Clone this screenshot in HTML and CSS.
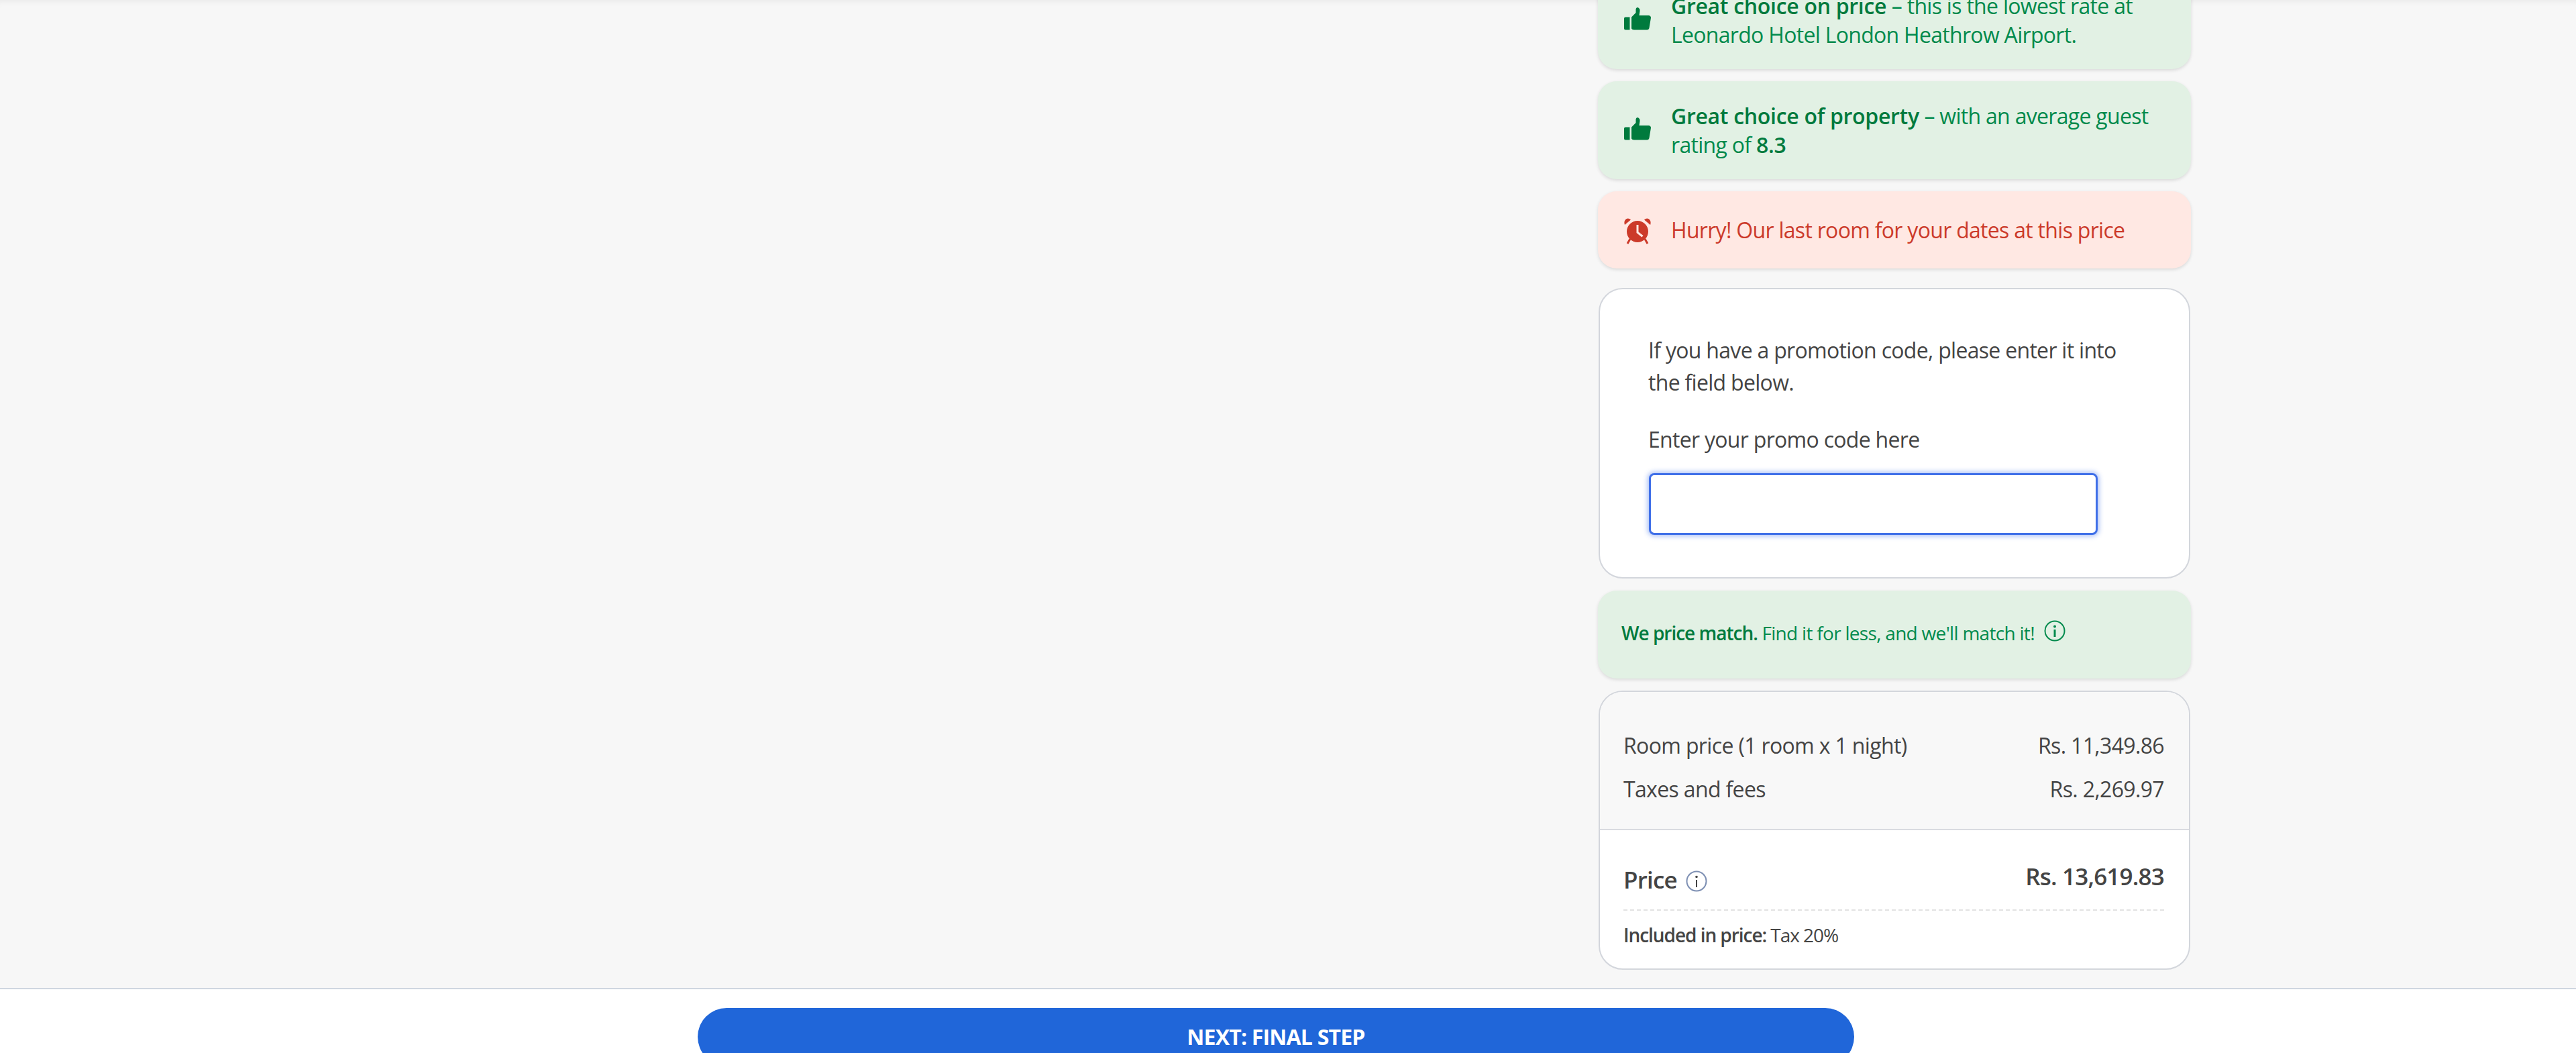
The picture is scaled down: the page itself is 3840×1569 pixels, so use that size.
FILE: index.html
```html
<!DOCTYPE html>
<html lang="en">
<head>
<meta charset="utf-8">
<title>Booking</title>
<link rel="stylesheet" href="styles.css">
</head>
<body>
<main class="page">
  <div class="spacer"></div>
  <aside class="side">
    <div class="note note-green first">
      <svg class="note-icon thumb" viewBox="0 0 40 34"><path d="M0 16.500q0-2 2-2h6.500v19H2q-2 0-2-2zM11 14.500 17.500 8V2.500Q18 0 20 0q4 1 3.500 5.500L22.500 12h14.500q3 .5 3 3.500l-2.500 15q-.5 3-3.500 3H15q-3 0-4-2z" fill="currentColor"/></svg>
      <p><b>Great choice on price</b> – this is the lowest rate at Leonardo Hotel London Heathrow Airport.</p>
    </div>
    <div class="note note-green">
      <svg class="note-icon thumb" viewBox="0 0 40 34"><path d="M0 16.500q0-2 2-2h6.500v19H2q-2 0-2-2zM11 14.500 17.500 8V2.500Q18 0 20 0q4 1 3.500 5.500L22.500 12h14.500q3 .5 3 3.500l-2.500 15q-.5 3-3.500 3H15q-3 0-4-2z" fill="currentColor"/></svg>
      <p><b>Great choice of property</b> – with an average guest rating of <b>8.3</b></p>
    </div>
    <div class="note note-red">
      <svg class="note-icon alarm" viewBox="0 0 40 40"><path d="M20 5a16 16 0 1 0 0 32 16 16 0 0 0 0-32zM18.500 11h3v10.500l7 5.500-2 2.500-8-6.500z" fill="currentColor" fill-rule="evenodd"/><path d="M1 11 10 3.500q-3-3-6.500-1.500Q-1 5 1 11zM39 11 30 3.500q3-3 6.500-1.500 4.500 3 2.500 9.500z" fill="currentColor"/><path d="M9 32 5 39M31 32l4 7" stroke="currentColor" stroke-width="3"/></svg>
      <p>Hurry! Our last room for your dates at this price</p>
    </div>
    <section class="promo">
      <p class="promo-text">If you have a promotion code, please enter it into the field below.</p>
      <label class="promo-label" for="promo">Enter your promo code here</label>
      <input class="promo-input" id="promo" type="text">
    </section>
    <div class="note note-green match">
      <p><b>We price match.</b> Find it for less, and we'll match it!</p>
      <svg class="info info-green" viewBox="0 0 32 32"><circle cx="16" cy="16" r="14.500" fill="none" stroke="currentColor" stroke-width="2"/><circle cx="16" cy="9.500" r="2" fill="currentColor"/><path d="M16 14v11" stroke="currentColor" stroke-width="3"/></svg>
    </div>
    <section class="price-card">
      <div class="breakdown">
        <div class="row"><span>Room price (1 room x 1 night)</span><span>Rs. 11,349.86</span></div>
        <div class="row"><span>Taxes and fees</span><span>Rs. 2,269.97</span></div>
      </div>
      <div class="total">
        <div class="total-row">
          <span class="total-label">Price <svg class="info info-blue" viewBox="0 0 32 32"><circle cx="16" cy="16" r="14.500" fill="none" stroke="currentColor" stroke-width="2"/><circle cx="16" cy="9.500" r="1.800" fill="#444"/><path d="M16 14v11" stroke="#444" stroke-width="2"/></svg></span>
          <span class="total-value">Rs. 13,619.83</span>
        </div>
        <p class="included"><b>Included in price:</b> Tax 20%</p>
      </div>
    </section>
  </aside>
</main>
<footer class="footer">
  <button class="next" type="button">NEXT: FINAL STEP</button>
</footer>
</body>
</html>
```
FILE: styles.css
```css
* { box-sizing: border-box; }
html, body { margin: 0; height: 100%; }
body {
  display: flex;
  flex-direction: column;
  height: 100vh;
  overflow: hidden;
  background: #f7f7f7;
  font-family: "Open Sans", "Noto Sans", sans-serif;
  color: #444;
}
p { margin: 0; }
.page {
  flex: 1;
  min-height: 0;
  display: flex;
  align-items: flex-end;
  overflow: hidden;
  padding-bottom: 27px;
  box-shadow: inset 0 9px 8px -6px rgba(0, 0, 0, .05);
}
.spacer { flex: 0 0 2383px; }
.side {
  flex: 0 0 882px;
  display: flex;
  flex-direction: column;
  gap: 18px;
}
.note {
  display: flex;
  align-items: center;
  flex-shrink: 0;
  margin: 0 -1px;
  padding: 0 40px 0 39px;
  border-radius: 28px;
  font-size: 32px;
  line-height: 43px;
  letter-spacing: -.7px;
  box-shadow: 0 2px 5px rgba(0, 0, 0, .12);
}
.note-green { height: 146px; background: #e2f1e4; color: #008a4c; }
.note-green b { color: #007a3d; font-weight: 600; letter-spacing: -.3px; }
.note-red { height: 115px; background: #ffe8e3; color: #cc3a2a; }
.note-icon { flex: 0 0 40px; width: 40px; height: 34px; margin-right: 30px; color: #007a3d; }
.thumb { margin-top: -5px; }
.alarm { height: 40px; margin-top: 3px; color: #cc3a2a; }
.promo {
  display: flex;
  flex-direction: column;
  align-items: flex-start;
  flex-shrink: 0;
  height: 433px;
  margin-top: 11px;
  padding: 67px 72px 0;
  background: #fff;
  border: 2px solid #d3d6dc;
  border-radius: 36px;
  font-size: 32px;
  letter-spacing: -.7px;
}
.promo-text { line-height: 48px; }
.promo-label { margin-top: 37px; line-height: 48px; }
.promo-input {
  width: 669px;
  height: 92px;
  margin-top: 26px;
  margin-left: 1px;
  background: #fff;
  border: 3px solid #3f6fe8;
  border-radius: 8px;
  outline: none;
  box-shadow: 0 0 7px 2px rgba(63, 111, 232, .45);
}
.match { height: 131px; padding-left: 35px; font-size: 28px; letter-spacing: -.7px; }
.match p { margin-bottom: 4px; }
.match b { letter-spacing: -1px; }
.info { display: inline-block; width: 32px; height: 32px; }
.info-green { margin-left: 14px; margin-top: -11px; }
.info-blue { vertical-align: -5px; margin-left: 5px; color: #7d8fb3; }
.price-card {
  flex-shrink: 0;
  height: 416px;
  background: #fff;
  border: 2px solid #d3d6dc;
  border-radius: 36px;
  overflow: hidden;
}
.breakdown {
  height: 206px;
  padding: 47px 37px 0 35px;
  background: #f8f8f8;
  border-bottom: 2px solid #d9dbe0;
  font-size: 32px;
  letter-spacing: -.65px;
}
.row { display: flex; justify-content: space-between; height: 65px; line-height: 65px; }
.total { padding: 0 37px 0 35px; }
.total-row {
  display: flex;
  justify-content: space-between;
  height: 120px;
  border-bottom: 2px dashed #e2e2e2;
  padding-top: 46px;
}
.total-label { font-size: 35px; font-weight: 600; letter-spacing: -.8px; line-height: 46px; margin-top: 5px; }
.total-value { font-size: 35px; font-weight: 600; letter-spacing: -.8px; line-height: 46px; }
.included { margin-top: 18px; font-size: 28px; line-height: 36px; letter-spacing: -1.05px; }
.included b { font-weight: 600; }
.footer {
  flex: 0 0 97px;
  min-height: 0;
  display: flex;
  align-items: flex-start;
  justify-content: center;
  padding: 28px 36px 0 0;
  background: #fff;
  border-top: 2px solid #cfd6e0;
}
.next {
  flex: 0 0 1724px;
  height: 86px;
  padding: 0;
  border: 0;
  border-radius: 43px;
  background: #2066d9;
  color: #fff;
  font: 700 32px/1 "Open Sans", sans-serif;
  letter-spacing: -.8px;
}
```
